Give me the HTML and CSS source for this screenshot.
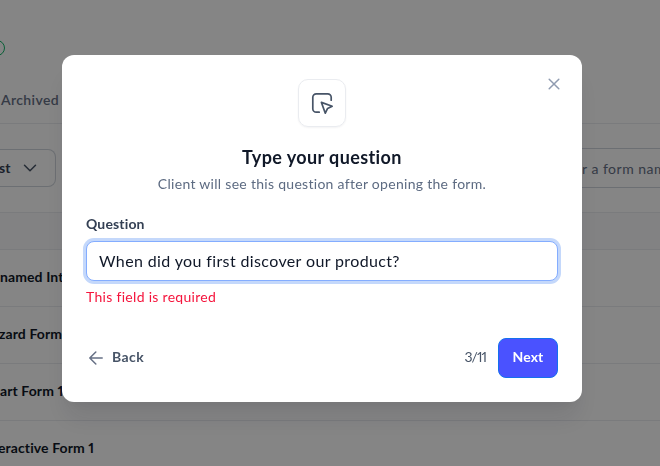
FILE: index.html
```
<!DOCTYPE html>
<html lang="en">
<head>
  <meta charset="UTF-8" />
  <meta name="viewport" content="width=device-width, initial-scale=1" />
  <title>Forms</title>
  <link rel="stylesheet" href="styles.css">
</head>
<body>
  <main class="page">
    <header class="page-header"><span class="status"></span></header>
    <nav class="tabs"><span class="tab">Archived</span></nav>
    <div class="toolbar">
      <div class="select">
        <span>st</span>
        <svg width="14" height="8" viewBox="0 0 14 8" fill="none" stroke="#475467" stroke-width="1.5" stroke-linecap="round" stroke-linejoin="round"><path d="M1.500 1.300 7 6.800l5.500-5.500"/></svg>
      </div>
      <div class="search">r a form name</div>
    </div>
    <div class="table-head"></div>
    <div class="row"><span class="row-unnamed">named Int</span></div>
    <div class="row"><span class="row-wizard">zard Form</span></div>
    <div class="row"><span class="row-smart">art Form 1</span></div>
    <div class="row"><span class="row-interactive">eractive Form 1</span></div>
  </main>

  <div class="overlay">
    <form class="modal" novalidate>
      <button type="button" class="close" aria-label="Close">
        <svg width="12" height="12" viewBox="0 0 12 12" fill="none" stroke="#8f9bb0" stroke-width="1.5" stroke-linecap="round"><path d="M1.200 1.200l9.600 9.600M10.800 1.200l-9.600 9.600"/></svg>
      </button>
      <div class="badge">
        <svg width="24" height="24" viewBox="0 0 24 24" fill="none" stroke="#475467" stroke-width="1.7" stroke-linecap="round" stroke-linejoin="round"><path d="M9.200 21.200H6.300a3.500 3.500 0 0 1-3.500-3.500V6.300a3.500 3.500 0 0 1 3.500-3.500h11.400a3.500 3.500 0 0 1 3.500 3.500v2.900"/><path d="M11.400 11.400 22.200 15.200l-4.600 2.200-2.300 4.800z"/></svg>
      </div>
      <h1 class="title">Type your question</h1>
      <p class="subtitle">Client will see this question after opening the form.</p>

      <label class="label" for="question">Question</label>
      <input class="input" type="text" id="question" name="question" value="When did you first discover our product?" />
      <p class="error">This field is required</p>

      <div class="footer">
        <button type="button" class="back">
          <svg width="14" height="14" viewBox="0 0 14 14" fill="none" stroke="#667085" stroke-width="1.5" stroke-linecap="round" stroke-linejoin="round"><path d="M13.200 7H.8M6.800 1 .8 7l6 6"/></svg>
          <span>Back</span>
        </button>
        <span class="step">3/11</span>
        <button type="submit" class="next">Next</button>
      </div>
    </form>
  </div>
</body>
</html>
```
FILE: styles.css
```
* { box-sizing: border-box; }
body { margin: 0; height: 466px; overflow: hidden; font-family: Lato, sans-serif; font-size: 14px; line-height: 20px; font-variant-numeric: proportional-nums; color: #101828; background: #fff; }
button { font: inherit; padding: 0; border: none; background: none; cursor: pointer; }
svg { display: block; }
h1, p { margin: 0; }

.page { height: 466px; overflow: hidden; }
.page-header { height: 78px; padding-top: 40px; }
.status { display: block; width: 25px; height: 16px; margin-left: -20px; border: 1px solid #12b76a; border-radius: 8px; }
.tabs { height: 46px; padding: 12px 0 0 1px; border-bottom: 1px solid #eaecf0; }
.tab { font-weight: 600; color: #667085; letter-spacing: .38px; }
.toolbar { display: flex; justify-content: space-between; height: 89px; padding-top: 25px; border-bottom: 1px solid #eaecf0; }
.select { display: flex; justify-content: space-between; align-items: center; width: 57px; height: 38px; margin-left: -1px; padding-right: 18px; border: 1px solid #d0d5dd; border-left: none; border-radius: 0 8px 8px 0; font-weight: 700; color: #344054; }
.search { width: 100px; height: 40px; margin-top: -1px; padding: 10px 0 0 22px; border-top: 1px solid #d0d5dd; border-bottom: 1px solid #d0d5dd; color: #667085; letter-spacing: .5px; white-space: nowrap; overflow: hidden; }
.table-head { height: 37px; background: #f9fafb; border-bottom: 1px solid #eaecf0; }
.row { height: 57px; padding-top: 17px; border-bottom: 1px solid #eaecf0; font-weight: 700; letter-spacing: .1px; white-space: nowrap; }
.row-unnamed { margin-left: 0; }
.row-wizard { margin-left: -1px; }
.row-smart { margin-left: 0; }
.row-interactive { margin-left: -2px; }

.overlay { position: fixed; inset: 0; display: flex; justify-content: center; align-items: flex-start; padding-top: 55px; background: rgba(0, 0, 0, .48); }
.modal { position: relative; width: 520px; height: 347px; margin-left: -16px; padding: 24px; background: #fff; border-radius: 12px; box-shadow: 0 20px 24px -4px rgba(16, 24, 40, .1), 0 8px 8px -4px rgba(16, 24, 40, .04); }
.close { position: absolute; top: 23px; right: 22px; }
.badge { display: flex; justify-content: center; align-items: center; width: 48px; height: 48px; margin: 0 auto; border: 1px solid #eaecf0; border-radius: 10px; box-shadow: 0 1px 2px rgba(16, 24, 40, .05); }
.title { margin-top: 16px; font-size: 18px; line-height: 28px; font-weight: 700; letter-spacing: .4px; text-align: center; }
.subtitle { margin-top: 3px; color: #5d6b82; letter-spacing: .29px; text-align: center; }
.label { display: block; margin-top: 20px; font-weight: 700; color: #344054; letter-spacing: .15px; }
.input { display: block; width: 100%; height: 40px; margin-top: 7px; padding: 0 12px 2px; border: 1px solid #84adff; border-radius: 8px; outline: none; box-shadow: 0 0 0 3px #c4d8fb; font-family: inherit; font-size: 16px; color: #101828; letter-spacing: .37px; }
.error { margin-top: 6px; color: #f5143c; letter-spacing: .3px; }
.footer { display: flex; align-items: center; margin-top: 31px; }
.back { display: flex; align-items: center; gap: 9px; margin-left: 3px; font-weight: 700; color: #475467; letter-spacing: .4px; }
.back span, .step { padding-bottom: 2px; }
.step { margin-left: auto; margin-right: 12px; color: #475467; letter-spacing: -1px; }
.next { width: 60px; height: 40px; padding-bottom: 2px; background: #4a52ff; border: 1px solid #1570ef; border-radius: 8px; color: #fff; font-weight: 700; letter-spacing: .1px; }
```
